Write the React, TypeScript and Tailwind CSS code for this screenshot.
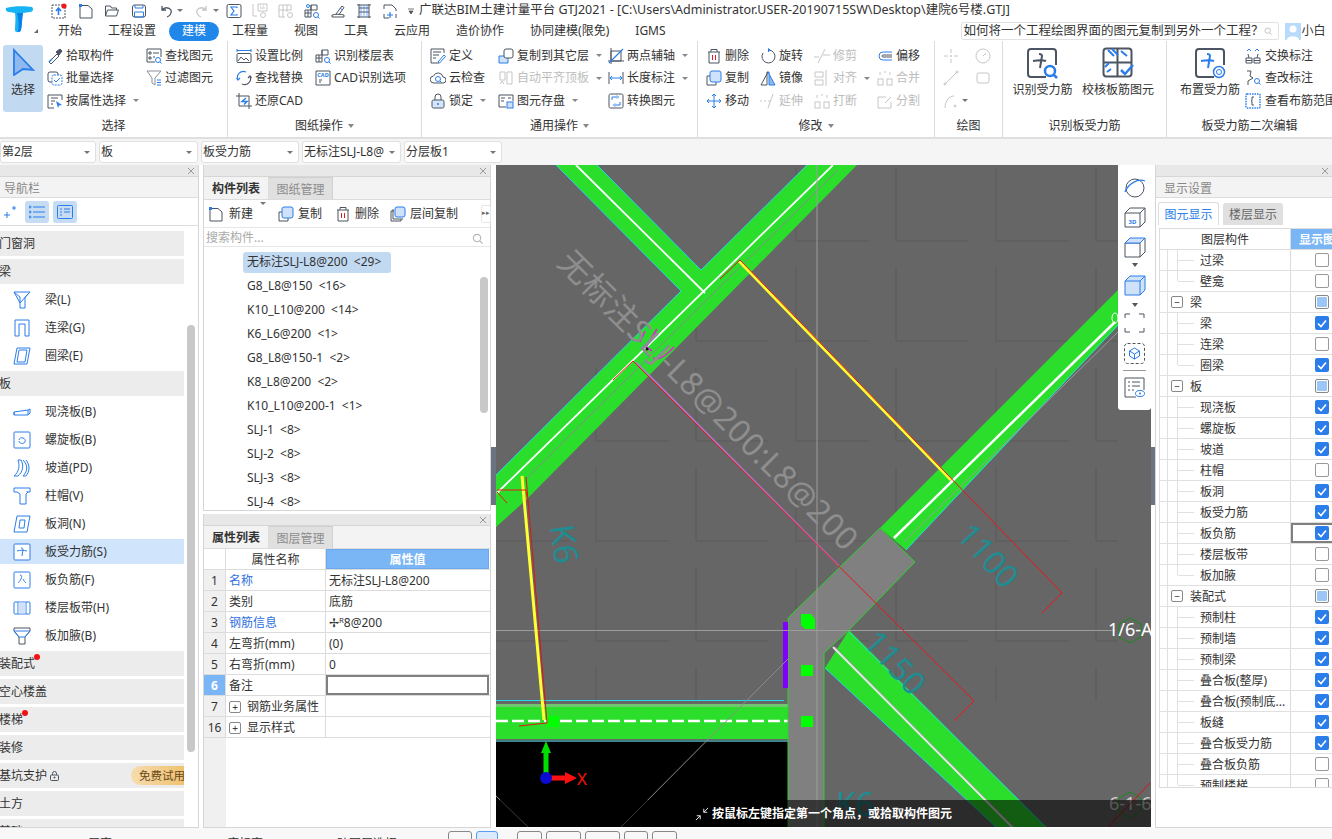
import type { ReactNode } from "react";

const DK = "#4b5563";
const BL = "#2b7de9";
const DI = "#c6c6c6";

function Svg({ s = 16, w, h, box, children }: { s?: number; w?: number; h?: number; box?: string; children: ReactNode }) {
  const width = w ?? s;
  const height = h ?? s;
  return (
    <svg width={width} height={height} viewBox={box ?? `0 0 ${width} ${height}`} fill="none" stroke={DK} strokeWidth="1" className="shrink-0">
      {children}
    </svg>
  );
}

// 顶部快捷栏 + 功能区图标
const icons: Record<string, ReactNode> = {
  upload: (<Svg><rect x="1" y="2" width="13" height="13" strokeDasharray="2 1" /><path d="M7.5 12V6M5 8l2.5-3L10 8" stroke={BL} strokeWidth="1.6" /><circle cx="13" cy="3" r="2.6" fill="#f01818" stroke="none" /></Svg>),
  newDoc: (<Svg><path d="M2 2.5h8l4 3.5v9H2z" /><rect x="1" y="1" width="3" height="3" fill={BL} stroke="none" /></Svg>),
  open: (<Svg><path d="M1.500 13V3h5l1 2h5v2M1.500 13l2-6h11l-2 6z" /></Svg>),
  save: (<Svg><rect x="1.500" y="2" width="13" height="12" rx="2" /><path d="M4 2v3h8V2M3.500 9h9v5h-9z" stroke={BL} /></Svg>),
  undo: (<Svg><path d="M4 3v4h4M4 7c2-3 7-3 9 0 1 3-1 6-4 7" strokeWidth="1.300" /></Svg>),
  redo: (<Svg><path d="M12 3v4H8M12 7c-2-3-7-3-9 0-1 3 1 6 4 7" stroke={DI} strokeWidth="1.300" /></Svg>),
  sigma: (<Svg><rect x="1" y="1.500" width="14" height="13" rx="1.500" stroke={DK} /><path d="M11 5V4H5l3 4-3 4h6v-1" stroke={BL} strokeWidth="1.200" /></Svg>),
  dimA: (<Svg><path d="M1 1v12h4M6 1h9v7H6zM8 3h1M11 3h1M8 5h5" stroke={DI} /><circle cx="11" cy="12" r="2.500" stroke={DI} /></Svg>),
  dimB: (<Svg><path d="M1 2h12v5M1 7h12M5 2v12M9 2v7M1 2v12h6" stroke={DI} /><circle cx="12" cy="12" r="2.500" stroke={DI} /></Svg>),
  floorFind: (<Svg><path d="M1 7h6v7H1zM7 2h6v5H7zM1 10h6M4 7v7M7 2v5" /><circle cx="12" cy="12" r="2.500" stroke={BL} /><path d="M14 14l1.500 1.500" stroke={BL} /><circle cx="4" cy="3" r="1.500" stroke={BL} /></Svg>),
  pencil: (<Svg><path d="M2 12c3-1 9-1 12 0v2H2zM6 11l6-8 2 1.500-5 7" stroke={DK} /><path d="M10 5l2 1.500" stroke={BL} /></Svg>),
  columns: (<Svg><path d="M1 2h14M1 14h14M3 1v14M13 1v14M3 5h10M3 9h10" stroke={DK} /><path d="M5 2v12M8 2v12M11 2v12" stroke={BL} strokeWidth=".6" /></Svg>),
  addDoc: (<Svg><path d="M2 6V2h8l4 4v2M2 11v4h5M14 11v4" /><path d="M8 9v6M5 12h6" stroke={BL} strokeWidth="1.200" /></Svg>),
  pick: (<Svg><path d="M2 14l8-8 2 2-8 8z" fill="#fff" /><path d="M9 4l3 3 3-4-2-2z" fill={DK} /><path d="M2 14l3-3" stroke={BL} strokeWidth="1.500" /></Svg>),
  batch: (<Svg><path d="M5 12H3a2 2 0 0 1-2-2V4a2 2 0 0 1 2-2h6a2 2 0 0 1 2 2v1" /><rect x="5" y="5" width="10" height="10" rx="2" strokeDasharray="2 1" stroke={BL} /><path d="M7 10l2 2 4-4" stroke={BL} /></Svg>),
  byProp: (<Svg><path d="M15 7V2H1v13h6M4 5h7M4 8h4M4 11h2" /><path d="M9 8l6 4-3 .5L11 15z" fill={BL} stroke="none" /></Svg>),
  find: (<Svg><path d="M9 14H1V1h14v8M3 4h2v2H3zM7 5h6M3 9h2v2H3zM7 9h2" /><circle cx="12" cy="12" r="2.500" stroke={BL} /><path d="M14 14l1.500 1.500" stroke={BL} /></Svg>),
  filter: (<Svg><path d="M1 1h14L9 8v7L6 13V8z" stroke="#8a8f98" /><path d="M11 10h4M11 12.500h4M11 15h4" stroke={BL} /></Svg>),
  scale: (<Svg><path d="M1 1v3M15 1v3M1 2.500h14" stroke={BL} /><rect x="1" y="5.500" width="14" height="9" rx="1" /><path d="M2 13l3-4 3 3 2-2 3 3" /></Svg>),
  floorTable: (<Svg><path d="M1 7h6v7H1zM7 2h6v5H7zM1 10h6M4 7v7M7 2v5" /><circle cx="12" cy="12" r="2.500" stroke={BL} /><path d="M14 14l1.500 1.500" stroke={BL} /></Svg>),
  replace: (<Svg><path d="M2 10a6 6 0 0 1 8-8M4 8L2 10 .500 8" stroke={BL} strokeWidth="1.200" /><path d="M14 6a6 6 0 0 1-8 8M12 8l2-2 1.500 2" strokeWidth="1.200" /></Svg>),
  cad: (<Svg><path d="M1 1h14v14H1z" /><text x="8" y="7" textAnchor="middle" fontSize="5.500" fontWeight="700" fill={BL} stroke="none">CAD</text><path d="M4 10h3M4 12h2" stroke={DK} /></Svg>),
  restore: (<Svg><path d="M3 0v13h13M0 3h13v13" /><path d="M10 5L6 8.500h5l-3 3" stroke={BL} strokeWidth="1.500" /></Svg>),
  define: (<Svg><path d="M14 5V1H1v14h8M3 4h8M3 7h6M3 10h3" /><path d="M8 14l6-7 1.500 1.500-6 6.500z" stroke={BL} /></Svg>),
  cloud: (<Svg><path d="M4 13a3.500 3.500 0 0 1-.5-7 5 5 0 0 1 9.500 1 3 3 0 0 1 0 6z" /><circle cx="8" cy="9" r="2.500" stroke={BL} /><path d="M10 11l1.500 1.500" stroke={BL} /></Svg>),
  lock: (<Svg><path d="M5 7V4a3 3 0 0 1 6 0v3" /><rect x="2" y="7" width="12" height="8" rx="1.500" fill="#d5e6fb" /><circle cx="8" cy="11" r="1" fill={BL} stroke="none" /></Svg>),
  copyFloor: (<Svg><path d="M1 8h9v7H1z" fill="#cfe2fa" stroke={BL} /><rect x="6" y="1" width="9" height="9" rx="2" fill="#fff" /></Svg>),
  layerCopy: (<Svg><path d="M4 5H1v10h10v-2M3 3v10h10" /><rect x="5" y="1" width="10" height="10" rx="2" fill="#cfe2fa" stroke={BL} /></Svg>),
  autoAlign: (<Svg><path d="M2 2h5v8H2zM9 2h5v12H9z" stroke={DI} /><path d="M2 14l2-3 2 3" stroke={DI} /></Svg>),
  disk: (<Svg><path d="M1 2h14v6M1 2v12h7M3 5h4M3 8h3M10 5h3" /><rect x="9" y="9" width="6" height="6" stroke={BL} fill="#cfe2fa" /></Svg>),
  twoPoint: (<Svg><path d="M3 3h10v10H3zM0 13h16M3 0v16" /><path d="M1 15L15 1" stroke={BL} strokeWidth="1.200" /></Svg>),
  length: (<Svg><path d="M1 2v12M15 2v12" /><path d="M2 8h12M4 6L2 8l2 2M12 6l2 2-2 2" stroke={BL} /></Svg>),
  convert: (<Svg><rect x="1" y="1" width="14" height="14" rx="1.500" /><path d="M4 7V4h5M9 2.500L10.500 4 9 5.500M12 9v3H7M7 10.500L5.500 12 7 13.500" stroke={BL} /></Svg>),
  del: (<Svg><path d="M2 4h12M5 4V1.500h6V4M3 4v11h10V4" /><path d="M6.500 7v5M9.500 7v5" stroke="#d92020" /></Svg>),
  rotate: (<Svg><path d="M9 2a6.500 6.500 0 1 1-6 3" /><path d="M8 .500L10 2 8 4" fill={BL} stroke={BL} /></Svg>),
  trim: (<Svg><path d="M0 9h5M9 7h7M4 15l7-14" stroke={DI} /></Svg>),
  offset: (<Svg><path d="M15 4H6a4 4 0 0 0 0 8h9" stroke={BL} /><path d="M15 7H6a1 1 0 0 0 0 2h9" /></Svg>),
  copy: (<Svg><path d="M4 6H1v9h9v-3" /><rect x="4" y="1" width="11" height="11" rx="2" fill="#cfe2fa" stroke={BL} /></Svg>),
  mirror: (<Svg><path d="M8 2L1 15h6V2z" /><path d="M8 2l7 13H9V2z" fill="#8fb9ef" stroke={BL} /></Svg>),
  align: (<Svg><path d="M1 2h8v5H1zM1 10h8v5H1zM12 0v16" stroke={DI} /></Svg>),
  merge: (<Svg><rect x="1" y="9" width="5" height="6" stroke={DI} /><rect x="10" y="9" width="5" height="6" stroke={DI} /><path d="M3 2v3M13 2v3M8 1v2" stroke={DI} /></Svg>),
  move: (<Svg><path d="M8 1v14M1 8h14M6 3l2-2 2 2M6 13l2 2 2-2M3 6L1 8l2 2M13 6l2 2-2 2" stroke={BL} /></Svg>),
  extend: (<Svg><path d="M0 8h2M4 8h2M8 8h3M8 15l5-14" stroke={DI} /></Svg>),
  split: (<Svg><path d="M14 9v6H1V4h8M8 10l6-6" stroke={DI} /></Svg>),
  cross: (<Svg><path d="M8 1v4M8 11v4M1 8h4M11 8h4" stroke={DI} /><circle cx="8" cy="8" r="1" fill={DI} stroke="none" /></Svg>),
  circleLine: (<Svg><circle cx="8" cy="8" r="7" stroke={DI} /><path d="M8 8l3-3" stroke={DI} /></Svg>),
  line: (<Svg><path d="M2 14L14 2" stroke={DI} /><circle cx="14" cy="2" r="1" stroke={DI} /><circle cx="2" cy="14" r="1" stroke={DI} /></Svg>),
  rect: (<Svg><rect x="2" y="3" width="12" height="10" rx="2" stroke={DI} /></Svg>),
  arc: (<Svg><path d="M2 15C2 8 6 3 11 3" stroke={DI} /><circle cx="12" cy="13" r="1" stroke={DI} /></Svg>),
  swap: (<Svg><path d="M1 10h6v5H1zM9 10h6v5H9zM1 12.500h6M9 12.500h6M4 10l-1-4M12 10l1-4" /><path d="M2 3l2-2M6 3L4 1M10 3l2-2M14 3l-2-2" stroke={BL} /></Svg>),
  editTag: (<Svg><path d="M2 1h4l-1 5 3 2-5 3v4" /><circle cx="12" cy="11" r="2.500" stroke={BL} /><path d="M14 13l1.500 1.500" stroke={BL} /></Svg>),
  range: (<Svg><rect x="1" y="1" width="14" height="14" rx="1" strokeDasharray="1.500 1" stroke={BL} strokeWidth="1.500" /><path d="M9 4H7v3.500L6 8l1 .5V12h2" /></Svg>),
};

function Bar({ blue }: { blue?: boolean }) {
  return blue ? <path d="M7 14c5-1 10-1 13 0M13 7c2 0 3 1 3 2l-2 12" stroke={BL} strokeWidth="2" /> : <path d="M7 14c5-1 10-1 13 0M13 7c2 0 3 1 3 2l-2 12" strokeWidth="2" />;
}

function BigRebar({ kind }: { kind: string }) {
  if (kind === "check") {
    return (
      <Svg s={32}>
        <rect x="1.500" y="1.500" width="28" height="28" rx="3" strokeWidth="2" />
        <path d="M15.500 2v27M2 15.500h27" strokeWidth="2" />
        <path d="M6 3l6 6M10 2l6 6M19 4l6 5M3 20l4-4M5 25l4-3" stroke={BL} strokeWidth="2" />
        <path d="M19 23l4 4 8-9" stroke={BL} strokeWidth="2.500" />
      </Svg>
    );
  }
  return (
    <Svg s={32}>
      <path d="M20 30H5a3 3 0 0 1-3-3V5a3 3 0 0 1 3-3h22a3 3 0 0 1 3 3v13" strokeWidth="2" />
      <Bar blue={kind === "set"} />
      {kind === "find" ? (
        <>
          <circle cx="24" cy="24" r="5" stroke={BL} strokeWidth="2.500" />
          <path d="M28 28l3 3" stroke={BL} strokeWidth="2.500" />
        </>
      ) : (
        <>
          <circle cx="25" cy="25" r="5.500" stroke={BL} strokeWidth="1.500" />
          <circle cx="25" cy="25" r="2.500" stroke={BL} />
        </>
      )}
    </Svg>
  );
}

const navIcons: Record<string, ReactNode> = {
  beam: (<Svg w={18} h={18}><path d="M1 1h16l-5 5v11H7V6z M1 1l6 11 10-11" stroke={BL} /></Svg>),
  link: (<Svg w={18} h={18}><path d="M2 17V1h14v16h-4V5H6v12z" stroke={BL} /></Svg>),
  ring: (<Svg w={18} h={18}><path d="M4 1h13l-3 16H1zM6 3h8l-2 12H4z" stroke={BL} /></Svg>),
  cast: (<Svg w={18} h={18}><path d="M1 9l14-2 2-1v4l-2 2H1zM1 9v3M15 7v5" stroke={BL} /></Svg>),
  spiral: (<Svg w={18} h={18}><rect x="1" y="1" width="16" height="16" rx="1" stroke={BL} /><path d="M6 9a3 3 0 1 1 6 2c-1 2-6 2-6-1" stroke={BL} /></Svg>),
  ramp: (<Svg w={18} h={18}><path d="M1 17c5-4 6-10 4-16h3c3 5 2 12-3 16zM10 1c5 5 5 11 0 16h3c4-5 4-11 0-16" stroke={BL} /></Svg>),
  cap: (<Svg w={18} h={18}><path d="M1 1h16v4h-3v-1M1 1v4h3l3 2v10h6V7l2-2" stroke={BL} /></Svg>),
  hole: (<Svg w={18} h={18}><path d="M4 1h13l-3 16H1z" stroke={BL} /><path d="M7 5h5l-1 8H6z" stroke={BL} /></Svg>),
  main: (<Svg w={18} h={18}><rect x="1" y="1" width="16" height="16" rx="1" stroke={BL} fill="#fff" /><path d="M4 8c3-1 7-1 10 0M8 5c2 0 2 1 2 2l-1 6" stroke={BL} /></Svg>),
  neg: (<Svg w={18} h={18}><rect x="1" y="1" width="16" height="16" rx="1" stroke={BL} /><path d="M7 4c2 0 2 2 1 4s-3 4-3 4M10 8c1 2 2 3 3 4" stroke={BL} /></Svg>),
  band: (<Svg w={18} h={18}><rect x="1" y="3" width="16" height="12" rx="1" stroke={BL} /><path d="M5 3v12M13 3v12" stroke={BL} /><rect x="5.500" y="3.500" width="7" height="11" fill="#cfe2fa" stroke="none" /></Svg>),
  haunch: (<Svg w={18} h={18}><path d="M1 1h16v3l-5 6v7H6v-7L1 4z" /><path d="M1 4h16l-5 6H6z" stroke={BL} /></Svg>),
};

function Item({ icon, label, caret, dim }: { icon: string; label: string; caret?: boolean; dim?: boolean }) {
  return (
    <div className={`flex h-[22.5px] items-center gap-[3px] whitespace-nowrap ${dim ? "text-[#bdbdbd]" : ""}`}>
      {icons[icon]}
      <span>{label}</span>
      {caret && <span className="ml-[4px] h-0 w-0 border-x-[3px] border-t-[3px] border-x-transparent border-t-[#888]" />}
    </div>
  );
}

function Group({ width, label, caret, children }: { width: string; label: string; caret?: boolean; children: ReactNode }) {
  return (
    <div className={`flex shrink-0 flex-col border-r border-[#dcdcdc] ${width}`}>
      <div className="flex h-[73px] pt-[3.500px]">{children}</div>
      <div className="flex flex-1 items-center justify-center gap-[5px]">
        {label}
        {caret && <span className="h-0 w-0 border-x-[3.5px] border-t-[4px] border-x-transparent border-t-[#888]" />}
      </div>
    </div>
  );
}

function Col({ className, children }: { className: string; children: ReactNode }) {
  return <div className={`flex shrink-0 flex-col ${className}`}>{children}</div>;
}

function Caret() {
  return <span className="h-0 w-0 border-x-[3px] border-t-[3px] border-x-transparent border-t-[#777]" />;
}

function PanelClose() {
  return (
    <div className="flex h-[12px] items-center justify-end border-b border-[#d6d6d6] bg-[#e8e8e8] pr-[3px] text-[#999]">
      <svg width="8" height="8" viewBox="0 0 8 8" stroke="#9a9a9a"><path d="M1 1l6 6M7 1L1 7" /></svg>
    </div>
  );
}

const quick = ["upload", "newDoc", "open", "save"];
const quick2 = ["sigma", "dimA", "dimB", "floorFind", "pencil", "columns", "addDoc"];

function TopBar() {
  return (
    <div className="flex h-[41px]">
      <div className="relative w-[50px] shrink-0">
        <svg width="30" height="30" viewBox="0 0 30 30" className="ml-[4px] mt-[3px]">
          <path d="M2 5c6-2 20-2 26-1 2 2 1 5-2 5l-7 1c-1 5-1 12-2 17-1 3-6 3-6 0 0-6 1-12 0-17L5 9C3 9 1 7 2 5z" fill="#16b4f2" />
          <path d="M13 10l6 0c-1 5-1 12-2 17-1 2-2 2-3 2 1-6 1-13-1-19z" fill="#0a7fe6" />
        </svg>
        <span className="absolute bottom-[8px] right-[12px] h-0 w-0 border-b-[4px] border-l-[4px] border-b-[#666] border-l-transparent" />
      </div>
      <div className="min-w-0 flex-1">
        <div className="flex h-[21px] items-center">
          <div className="flex w-[102px] shrink-0 gap-[10.500px] pl-[1px]">
            {quick.map((k) => <span key={k}>{icons[k]}</span>)}
          </div>
          <div className="flex w-[34px] shrink-0 items-center gap-[3px] pl-[6px]">{icons.undo}<Caret /></div>
          <div className="flex w-[34px] shrink-0 items-center gap-[3px] pl-[8px]">{icons.redo}<Caret /></div>
          <div className="ml-[6px] flex shrink-0 gap-[10px]">
            {quick2.map((k) => <span key={k}>{icons[k]}</span>)}
          </div>
          <svg width="6" height="6" viewBox="0 0 6 6" className="ml-[10px] shrink-0" stroke="#555" fill="#555"><path d="M0 1h6M1 3h4l-2 3z" strokeWidth=".8" /></svg>
          <span className="ml-[5px] whitespace-nowrap text-[12.500px]">广联达BIM土建计量平台 GTJ2021 - [C:\Users\Administrator.USER-20190715SW\Desktop\建院6号楼.GTJ]</span>
        </div>
        <div className="flex h-[20px] items-center text-[12px]">
          <span className="ml-[8px]">开始</span>
          <span className="ml-[26px]">工程设置</span>
          <span className="ml-[13px] flex h-[19px] w-[50px] items-center justify-center rounded-full bg-[#1f86ea] text-white">建模</span>
          <span className="ml-[13px]">工程量</span>
          <span className="ml-[26px]">视图</span>
          <span className="ml-[26px]">工具</span>
          <span className="ml-[26px]">云应用</span>
          <span className="ml-[26px]">造价协作</span>
          <span className="ml-[26px]">协同建模(限免)</span>
          <span className="ml-[26px]">IGMS</span>
          <div className="ml-[295px] flex h-[18px] w-[318px] shrink-0 items-center justify-between rounded-[2px] border border-[#e2e2e2] bg-white pl-[2px] pr-[6px] text-[12.500px]">
            <span className="whitespace-nowrap">如何将一个工程绘图界面的图元复制到另外一个工程？</span>
            <svg width="12" height="12" viewBox="0 0 12 12" fill="none" stroke="#b5b5b5" strokeWidth="1.200"><circle cx="5.500" cy="5.500" r="4" /><path d="M8.500 8.500l3 3" /></svg>
          </div>
          <svg width="16" height="17" viewBox="0 0 16 17" className="ml-[6px] shrink-0"><rect width="16" height="17" fill="#b9dbfb" /><circle cx="8" cy="6" r="3.500" fill="#fff" /><path d="M2 17c0-5 12-5 12 0z" fill="#fff" /></svg>
          <span className="ml-[1px] whitespace-nowrap">小白</span>
        </div>
      </div>
    </div>
  );
}

function Ribbon() {
  return (
    <div className="flex h-[98px] border-b-2 border-[#dfdfdf] text-[12px]">
      <Group width="w-[228px]" label="选择">
        <div className="ml-[3px] flex h-[67px] w-[40px] shrink-0 flex-col items-center rounded-[3px] bg-[#c2d9f2] pt-[3px]">
          <svg width="24" height="28" viewBox="0 0 24 28" fill="#8fb9ef" stroke={BL} strokeWidth="1.800"><path d="M3 2L22 22L12 21L3 27z" /></svg>
          <span className="mt-[5px]">选择</span>
        </div>
        <Col className="ml-[4px] w-[99px]">
          <Item icon="pick" label="拾取构件" />
          <Item icon="batch" label="批量选择" />
          <Item icon="byProp" label="按属性选择" caret />
        </Col>
        <Col className="w-[70px]">
          <Item icon="find" label="查找图元" />
          <Item icon="filter" label="过滤图元" />
        </Col>
      </Group>
      <Group width="w-[194px]" label="图纸操作" caret>
        <Col className="ml-[8px] w-[79px]">
          <Item icon="scale" label="设置比例" />
          <Item icon="replace" label="查找替换" />
          <Item icon="restore" label="还原CAD" />
        </Col>
        <Col className="w-[90px]">
          <Item icon="floorTable" label="识别楼层表" />
          <Item icon="cad" label="CAD识别选项" />
        </Col>
      </Group>
      <Group width="w-[276px]" label="通用操作" caret>
        <Col className="ml-[8px] w-[68px]">
          <Item icon="define" label="定义" />
          <Item icon="cloud" label="云检查" />
          <Item icon="lock" label="锁定" caret />
        </Col>
        <Col className="w-[110px]">
          <Item icon="copyFloor" label="复制到其它层" caret />
          <Item icon="autoAlign" label="自动平齐顶板" caret dim />
          <Item icon="disk" label="图元存盘" caret />
        </Col>
        <Col className="w-[88px]">
          <Item icon="twoPoint" label="两点辅轴" caret />
          <Item icon="length" label="长度标注" caret />
          <Item icon="convert" label="转换图元" />
        </Col>
      </Group>
      <Group width="w-[237px]" label="修改" caret>
        <Col className="ml-[8px] w-[54px]">
          <Item icon="del" label="删除" />
          <Item icon="copy" label="复制" />
          <Item icon="move" label="移动" />
        </Col>
        <Col className="w-[54px]">
          <Item icon="rotate" label="旋转" />
          <Item icon="mirror" label="镜像" />
          <Item icon="extend" label="延伸" dim />
        </Col>
        <Col className="w-[63px]">
          <Item icon="trim" label="修剪" dim />
          <Item icon="align" label="对齐" caret dim />
          <Item icon="merge" label="打断" dim />
        </Col>
        <Col className="w-[50px]">
          <Item icon="offset" label="偏移" />
          <Item icon="merge" label="合并" dim />
          <Item icon="split" label="分割" dim />
        </Col>
      </Group>
      <Group width="w-[68px]" label="绘图">
        <Col className="ml-[8px] w-[32px]">
          <Item icon="cross" label="" />
          <Item icon="line" label="" />
          <div className="flex h-[22.500px] items-center gap-[3px]">{icons.arc}<Caret /></div>
        </Col>
        <Col className="w-[20px]">
          <Item icon="circleLine" label="" />
          <Item icon="rect" label="" />
        </Col>
      </Group>
      <Group width="w-[164px]" label="识别板受力筋">
        <div className="ml-[-1px] flex w-[80px] shrink-0 flex-col items-center pt-[2px]">
          <BigRebar kind="find" />
          <span className="mt-[2px] whitespace-nowrap pl-[1px]">识别受力筋</span>
        </div>
        <div className="flex w-[72px] shrink-0 flex-col items-center pt-[2px]">
          <BigRebar kind="check" />
          <span className="mt-[2px] whitespace-nowrap">校核板筋图元</span>
        </div>
      </Group>
      <Group width="flex-1 min-w-0 !border-r-0" label="板受力筋二次编辑">
        <div className="ml-[9px] flex w-[68px] shrink-0 flex-col items-center pt-[2px]">
          <BigRebar kind="set" />
          <span className="mt-[2px] whitespace-nowrap">布置受力筋</span>
        </div>
        <Col className="ml-[1px]">
          <div className="flex h-[22.500px] items-center gap-[4px] whitespace-nowrap">{icons.swap}<span>交换标注</span></div>
          <div className="flex h-[22.500px] items-center gap-[4px] whitespace-nowrap">{icons.editTag}<span>查改标注</span></div>
          <div className="flex h-[22.500px] items-center gap-[4px] whitespace-nowrap">{icons.range}<span>查看布筋范围</span></div>
        </Col>
      </Group>
    </div>
  );
}

function Sel({ label, width }: { label: string; width: string }) {
  return (
    <div className={`flex h-[22px] shrink-0 items-center justify-between rounded-[3px] border border-[#e0e0e0] bg-white pl-[1px] pr-[5px] ${width}`}>
      <span className="whitespace-nowrap">{label}</span>
      <Caret />
    </div>
  );
}

const navRows: { t: string; k?: string; sel?: boolean; dot?: boolean; extra?: string }[] = [
  { t: "门窗洞" },
  { t: "梁" },
  { t: "梁(L)", k: "beam" },
  { t: "连梁(G)", k: "link" },
  { t: "圈梁(E)", k: "ring" },
  { t: "板" },
  { t: "现浇板(B)", k: "cast" },
  { t: "螺旋板(B)", k: "spiral" },
  { t: "坡道(PD)", k: "ramp" },
  { t: "柱帽(V)", k: "cap" },
  { t: "板洞(N)", k: "hole" },
  { t: "板受力筋(S)", k: "main", sel: true },
  { t: "板负筋(F)", k: "neg" },
  { t: "楼层板带(H)", k: "band" },
  { t: "板加腋(B)", k: "haunch" },
  { t: "装配式", dot: true },
  { t: "空心楼盖" },
  { t: "楼梯", dot: true },
  { t: "装修" },
  { t: "基坑支护", extra: "lock" },
  { t: "土方" },
  { t: "基础" },
];

function NavPanel() {
  return (
    <div className="flex h-full w-[199px] shrink-0 flex-col border-b border-r border-[#d6d6d6] bg-white">
      <PanelClose />
      <div className="flex h-[21px] items-center border-b border-[#dcdcdc] bg-[#f3f3f3] pl-[4px] pt-[3px] text-[#888]">导航栏</div>
      <div className="flex h-[28px] items-center border-b border-[#dcdcdc]">
        <svg width="14" height="14" viewBox="0 0 14 14" stroke={BL} className="ml-[3px]"><path d="M1 10h6M4 7v6M9 3h4M11 1v4" /></svg>
        <span className="ml-[8px] flex h-[22px] w-[24px] items-center justify-center rounded-[3px] bg-[#c5dcf3]">
          <svg width="16" height="14" viewBox="0 0 16 14" stroke={BL}><path d="M4 2h12M4 7h12M4 12h12" /><circle cx="1" cy="2" r="1" fill="none" /><circle cx="1" cy="7" r="1" fill="none" /><circle cx="1" cy="12" r="1" fill="none" /></svg>
        </span>
        <span className="ml-[4px] flex h-[22px] w-[24px] items-center justify-center rounded-[3px] bg-[#c5dcf3]">
          <svg width="16" height="14" viewBox="0 0 16 14" stroke={BL} fill="none"><rect x=".5" y=".5" width="15" height="13" rx="1" /><path d="M3 4h2M7 4h6M3 7h2M7 7h6M3 10h2" /></svg>
        </span>
      </div>
      <div className="flex min-h-0 flex-1 overflow-hidden pt-[5px]">
        <div className="w-[184px] shrink-0">
          {navRows.map((r) => (
            <div key={r.t} className={`mb-[3px] flex h-[25px] items-center whitespace-nowrap ${r.sel ? "bg-[#d0e5fb]" : r.k ? "" : "bg-[#ececec]"}`}>
              {r.k ? (
                <>
                  <span className="ml-[13px] w-[32px] shrink-0">{navIcons[r.k]}</span>
                  <span>{r.t}</span>
                </>
              ) : (
                <span className="relative ml-[-1px]">
                  {r.t}
                  {r.dot && <span className="absolute right-[-5px] top-[-1px] h-[6px] w-[6px] rounded-full bg-[#f21010]" />}
                </span>
              )}
              {r.extra && (
                <>
                  <svg width="9" height="10" viewBox="0 0 9 10" fill="none" stroke={DK} className="ml-[3px]"><path d="M2.500 4V2.500a2 2 0 0 1 4 0V4" /><rect x=".5" y="4" width="8" height="5.500" rx="1" /><circle cx="4.500" cy="6.500" r=".6" fill={DK} /></svg>
                  <span className="ml-auto flex h-[19px] w-[53px] items-center rounded-l-full bg-gradient-to-r from-[#f7dcae] to-[#efc26e] pl-[8px] text-[11.500px] text-[#6b4a1a]">免费试用</span>
                </>
              )}
            </div>
          ))}
        </div>
        <div className="ml-[3px] mt-[94px] h-[427px] w-[8px] rounded-full bg-[#c8c8c8]" />
      </div>
    </div>
  );
}

const compRows = ["无标注SLJ-L8@200  <29>", "G8_L8@150  <16>", "K10_L10@200  <14>", "K6_L6@200  <1>", "G8_L8@150-1  <2>", "K8_L8@200  <2>", "K10_L10@200-1  <1>", "SLJ-1  <8>", "SLJ-2  <8>", "SLJ-3  <8>", "SLJ-4  <8>"];

function PanelTabs({ a, b }: { a: string; b: string }) {
  return (
    <div className="flex h-[23px] items-stretch border-b border-[#dcdcdc] bg-[#f3f3f3]">
      <div className="flex w-[65px] items-center justify-center border-r border-[#dcdcdc] pt-[2px] font-bold">{a}</div>
      <div className="flex w-[64px] items-center justify-center border-r border-t border-[#d0d0d0] bg-[#e0e0e0] pt-[2px] text-[#8c8c8c]">{b}</div>
    </div>
  );
}

function ComponentPanel() {
  return (
    <div className="flex h-[346px] shrink-0 flex-col border-x border-b border-[#d6d6d6] bg-white">
      <PanelClose />
      <PanelTabs a="构件列表" b="图纸管理" />
      <div className="flex h-[28px] items-center whitespace-nowrap border-b border-[#e6e6e6] pl-[4px]">
        <span className="shrink-0">{icons.newDoc}</span>
        <span className="ml-[5px] shrink-0">新建</span>
        <span className="ml-[7px] shrink-0"><Caret /></span>
        <span className="ml-[12px] shrink-0">{icons.copy}</span>
        <span className="ml-[4px] shrink-0">复制</span>
        <span className="ml-[13px] shrink-0">{icons.del}</span>
        <span className="ml-[4px] shrink-0">删除</span>
        <span className="ml-[11px] shrink-0">{icons.layerCopy}</span>
        <span className="ml-[4px] shrink-0">层间复制</span>
        <span className="ml-[23px] flex h-[18px] w-[10px] shrink-0 items-center justify-center rounded-[2px] border border-[#e6e6e6] text-[7px] text-[#666]">▸▸</span>
      </div>
      <div className="flex h-[19px] items-center justify-between border-b border-[#e6e6e6] pl-[2px] pr-[7px] pt-[2px] text-[#aaa]">
        <span>搜索构件...</span>
        <svg width="11" height="11" viewBox="0 0 12 12" fill="none" stroke="#b5b5b5" strokeWidth="1.200"><circle cx="5.500" cy="5.500" r="4" /><path d="M8.500 8.500l3 3" /></svg>
      </div>
      <div className="flex min-h-0 flex-1 overflow-hidden pt-[3px]">
        <div className="w-[275px] shrink-0 pl-[39px]">
          {compRows.map((r, i) => (
            <div key={r} className="flex h-[24px] items-center">
              <span className={`flex h-[21px] items-center whitespace-pre rounded-[3px] pl-[4px] ${i === 0 ? "w-[148px] bg-[#c2d9f2]" : ""}`}>{r}</span>
            </div>
          ))}
        </div>
        <div className="ml-[1px] mt-[27px] h-[136px] w-[8px] rounded-full bg-[#c8c8c8]" />
      </div>
    </div>
  );
}

const props = [
  { n: "1", k: "名称", v: "无标注SLJ-L8@200", blue: true },
  { n: "2", k: "类别", v: "底筋" },
  { n: "3", k: "钢筋信息", v: "✢ᴿ8@200", blue: true },
  { n: "4", k: "左弯折(mm)", v: "(0)" },
  { n: "5", k: "右弯折(mm)", v: "0" },
  { n: "6", k: "备注", v: "", active: true },
  { n: "7", k: "钢筋业务属性", v: "", tree: true },
  { n: "16", k: "显示样式", v: "", tree: true },
];

function PropertyPanel() {
  return (
    <div className="flex min-h-0 flex-1 flex-col border-x border-b border-[#d6d6d6] bg-white">
      <PanelClose />
      <PanelTabs a="属性列表" b="图层管理" />
      <div className="flex min-h-0 flex-1">
        <div className="flex min-w-0 flex-1 flex-col">
          <div className="flex h-[21px] border-b border-[#dcdcdc]">
            <div className="w-[22px] shrink-0 border-r border-[#dcdcdc]" />
            <div className="flex w-[100px] shrink-0 items-center justify-center border-r border-[#dcdcdc] pt-[2px]">属性名称</div>
            <div className="flex w-[163px] shrink-0 items-center justify-center border border-[#6aa9ef] bg-[#7ab5f5] pt-[2px] font-bold text-white">属性值</div>
          </div>
          {props.map((p) => (
            <div key={p.n} className="flex h-[21px] border-b border-[#dcdcdc]">
              <div className={`flex w-[22px] shrink-0 items-center justify-center border-r border-[#dcdcdc] pt-[2px] ${p.active ? "bg-[#7ab5f5] font-bold text-white" : "bg-[#f0f0f0]"}`}>{p.n}</div>
              <div className={`flex w-[100px] shrink-0 items-center whitespace-nowrap border-r border-[#dcdcdc] pl-[3px] pt-[2px] ${p.blue ? "text-[#2f6fe0]" : ""}`}>
                {p.tree && <span className="mr-[6px] flex h-[12px] w-[12px] items-center justify-center rounded-[2px] border border-[#888] text-[10px] leading-none">+</span>}
                {p.k}
              </div>
              <div className={`flex w-[163px] shrink-0 items-center pl-[3px] pt-[2px] ${p.active ? "border-2 border-[#808080]" : ""}`}>{p.v}</div>
            </div>
          ))}
          <div className="flex-1"><div className="h-full w-[22px] bg-[#f0f0f0]" /></div>
        </div>
      </div>
    </div>
  );
}

// 画布
function Canvas() {
  const cyan = "#20d8e8";
  const green = "#2bde2b";
  const vx = [
    [596, 368],
    [696, 268],
    [796, 168],
    [896, 168],
    [996, 168],
    [1096, 168],
  ];
  const hy = [
    [241, 796],
    [341, 696],
    [441, 596],
    [541, 496],
    [641, 496],
  ];
  return (
    <svg width="655" height="662" viewBox="496 165 655 662" className="block bg-[#666666]">
      {vx.map(([x, y]) => <line key={x} x1={x} x2={x} y1={y} y2={700} stroke="#5b5b5b" strokeDasharray="73 27" />)}
      {hy.map(([y, x]) => <line key={y} x1={x} x2={1118} y1={y} y2={y} stroke="#5b5b5b" strokeDasharray="73 27" />)}

      <rect x="496" y="742" width="292" height="86" fill="#000" />
      {/* 横向板带 */}
      <rect x="496" y="707" width="292" height="32" fill={green} />
      <rect x="496" y="704" width="292" height="3" fill="#6fc86f" />
      <line x1="496" x2="784" y1="700.500" y2="700.500" stroke={cyan} />
      <line x1="496" x2="788" y1="741" y2="741" stroke="#1fa0a8" />
      <line x1="496" x2="788" y1="721" y2="721" stroke="#fff" strokeWidth="2.500" strokeDasharray="12 4" />

      {/* 斜向板带 */}
      <polygon points="496,475 681,291 556,165 597,165 701,270 807,165 857,165 526,500 496,527" fill={green} />
      <path d="M496 475L681 291L556 165M597 165L701 270L807 165" stroke={cyan} fill="none" />
      <path d="M497 493L833 165M576 165L705 293" stroke="#fff" strokeWidth="1.800" fill="none" />
      <path d="M527 478L838 170" stroke="#8a8a8a" />

      <polygon points="880,528 1150,258 1150,292 906,550" fill={green} />
      <path d="M906 550L1118 325" stroke={cyan} />
      <path d="M894 538L1115 322" stroke="#fff" strokeWidth="2.500" />
      <path d="M904 542L1118 332" stroke="#9a9a9a" />
      <ellipse cx="1115" cy="318" rx="3" ry="5" stroke="#fff" fill="none" />

      <polygon points="849,630 1047,828 997,828 825,668" fill={green} />
      <path d="M849 632L1047 828M825 668L997 828" stroke={cyan} />
      <path d="M833 647L1013 828" stroke="#e6e6e6" strokeWidth="2" />
      <path d="M835 647L1013 826" stroke="#999" strokeWidth=".8" />

      {/* 柱 */}
      <polygon points="880,528 915,562 849,630 824,653 824,828 788,828 788,618" fill="#808080" stroke="#28d428" />
      <rect x="783" y="622" width="5" height="66" fill="#7f00ff" />
      <polygon points="801,614 811,614 815,619 815,629 805,629 801,625" fill="#00ff00" />
      <rect x="801" y="665" width="12" height="11" fill="#00ff00" />
      <rect x="801" y="716" width="12" height="11" fill="#00ff00" />
      <rect x="547" y="716" width="12" height="11" fill="#00ff00" />

      {/* 轴线 */}
      <line x1="817" x2="817" y1="165" y2="828" stroke="#9c9c9c" />
      <line x1="496" x2="1115" y1="630.500" y2="630.500" stroke="#9c9c9c" />
      <path d="M788 659L620 828M495 795L529 828" stroke="#8c8c8c" />

      {/* 钢筋 */}
      <path d="M739 261L951 480" stroke="#ffff33" strokeWidth="3" />
      <path d="M720 279L740 260L1062 593L1042 613" stroke="#f01414" fill="none" />
      <path d="M636 362L839 566" stroke="#b07cd8" strokeWidth="1.500" />
      <path d="M613 380L633 361L974 701L954 721" stroke="#f01414" fill="none" />
      <path d="M522 476L544 720" stroke="#ffff33" strokeWidth="3" />
      <path d="M526 477L547 723L519 726" stroke="#e01414" fill="none" />
      <path d="M497 490H526L528 503M497 492L507 503" stroke="#f01414" fill="none" />
      <path d="M645 331L640 342M657 329L646 347L652 351M653 358Q660 362 674 347" stroke="#e02ad0" strokeWidth="1.800" fill="none" />
      <circle cx="647" cy="349" r="1.500" fill="#000" />

      {/* 文字标注 */}
      <text x="556" y="264" fontSize="32" fill="#8e8e8e" transform="rotate(45 556 264)" textLength="408">无标注SLJ-L8@200:L8@200</text>
      <g fill="#1f8c92">
        <text x="550" y="526" fontSize="33" transform="rotate(82 550 526)">K6</text>
        <text x="955" y="536" fontSize="32" transform="rotate(48 955 536)">1100</text>
        <text x="862" y="643" fontSize="32" transform="rotate(48 862 643)">1150</text>
        <text x="836" y="816" fontSize="32">K6</text>
      </g>
      <g fill="#ffffff" fontSize="18">
        <polygon points="1130,618 1141,624 1141,637 1130,643 1119,637 1119,624" fill="none" stroke="#1a8a1a" />
        <text x="1108" y="636">1/6-A</text>
      </g>
      <polygon points="1130,792 1141,798 1141,811 1130,818 1119,811 1119,798" fill="none" stroke="#1a8a1a" />
      <text x="1109" y="810" fontSize="18" fill="#cfcfcf">6-1-6</text>
      <path d="M1150 783L1107 828" stroke="#d81414" />

      {/* 坐标轴 */}
      <path d="M546 778V752" stroke="#00e000" strokeWidth="5" />
      <polygon points="541,753 551,753 546,741" fill="#00e000" />
      <path d="M546 778H565" stroke="#ff1010" strokeWidth="5" />
      <polygon points="565,772 565,784 577,778" fill="#ff1010" />
      <circle cx="546" cy="778" r="6" fill="#0a0ad0" />
      <text x="577" y="785" fontSize="17" fill="#ff1010">X</text>
    </svg>
  );
}

const layerRows: { t: string; p?: boolean; c: number; sel?: boolean; last?: boolean }[] = [
  { t: "过梁", c: 0 },
  { t: "壁龛", c: 0, last: true },
  { t: "梁", p: true, c: 2 },
  { t: "梁", c: 1 },
  { t: "连梁", c: 0 },
  { t: "圈梁", c: 1, last: true },
  { t: "板", p: true, c: 2 },
  { t: "现浇板", c: 1 },
  { t: "螺旋板", c: 1 },
  { t: "坡道", c: 1 },
  { t: "柱帽", c: 0 },
  { t: "板洞", c: 1 },
  { t: "板受力筋", c: 1 },
  { t: "板负筋", c: 1, sel: true },
  { t: "楼层板带", c: 0 },
  { t: "板加腋", c: 0, last: true },
  { t: "装配式", p: true, c: 2 },
  { t: "预制柱", c: 1 },
  { t: "预制墙", c: 1 },
  { t: "预制梁", c: 1 },
  { t: "叠合板(整厚)", c: 1 },
  { t: "叠合板(预制底...", c: 1 },
  { t: "板缝", c: 1 },
  { t: "叠合板受力筋", c: 1 },
  { t: "叠合板负筋", c: 0 },
  { t: "预制楼梯", c: 0, last: true },
];

function Check({ c }: { c: number }) {
  if (c === 1) {
    return (
      <span className="flex h-[14px] w-[14px] items-center justify-center rounded-[2px] bg-[#2b7de9]">
        <svg width="10" height="9" viewBox="0 0 10 9" fill="none" stroke="#fff" strokeWidth="1.600"><path d="M1 4.500l3 3 5-6" /></svg>
      </span>
    );
  }
  if (c === 2) {
    return (
      <span className="flex h-[14px] w-[14px] items-center justify-center rounded-[2px] border border-[#888] bg-white">
        <span className="h-[10px] w-[10px] rounded-[1px] bg-[#9cc6f8]" />
      </span>
    );
  }
  return <span className="h-[14px] w-[14px] rounded-[2px] border border-[#999] bg-white" />;
}

function DisplayPanel() {
  return (
    <div className="flex h-full min-w-0 flex-1 flex-col overflow-hidden border-b border-l border-[#d6d6d6] bg-white">
      <PanelClose />
      <div className="flex h-[21px] items-center border-b border-[#dcdcdc] bg-[#f3f3f3] pl-[8px] pt-[3px] text-[#888]">显示设置</div>
      <div className="flex h-[27px] items-end gap-[4px] pl-[2px]">
        <div className="flex h-[23px] w-[61px] items-center justify-center rounded-t-[3px] border border-b-0 border-[#dcdcdc] pt-[2px] text-[#2b7de9]">图元显示</div>
        <div className="flex h-[22px] w-[60px] items-center justify-center rounded-t-[3px] bg-[#e0e0e0] pt-[2px] text-[#666]">楼层显示</div>
      </div>
      <div className="ml-[3px] mt-[3px] flex h-[560px] flex-col overflow-hidden border-b border-l border-t border-[#dcdcdc]">
        <div className="flex h-[21px] shrink-0 border-b border-[#dcdcdc]">
          <div className="flex w-[131px] shrink-0 items-center justify-center border-r border-[#dcdcdc] pt-[2px]">图层构件</div>
          <div className="flex w-[60px] shrink-0 items-center overflow-hidden whitespace-nowrap bg-[#7ab5f5] pl-[8px] pt-[2px] font-bold text-white">显示图元</div>
        </div>
        {layerRows.map((r, i) => (
          <div key={`${r.t}${i}`} className="flex h-[21px] shrink-0 border-b border-[#e0e0e0]">
            <div className="flex w-[131px] shrink-0 items-center border-r border-[#dcdcdc]">
              <span className="h-full w-[8px] shrink-0 border-r border-[#e0e0e0]" />
              {r.p ? (
                <>
                  <span className="ml-[3px] flex h-[12px] w-[12px] shrink-0 items-center justify-center rounded-[2px] border border-[#888] text-[10px] leading-none">−</span>
                  <span className="ml-[7px] whitespace-nowrap pt-[2px]">{r.t}</span>
                </>
              ) : (
                <>
                  <span className={`w-[10px] shrink-0 border-r border-[#e0e0e0] ${r.last ? "mb-[10px] h-[10px] self-start" : "h-full"}`} />
                  <span className="h-px w-[16px] shrink-0 bg-[#e0e0e0]" />
                  <span className="ml-[6px] whitespace-nowrap pt-[2px]">{r.t}</span>
                </>
              )}
            </div>
            <div className={`flex w-[60px] shrink-0 items-center pl-[24px] ${r.sel ? "border-2 border-[#808080] !pl-[22px]" : ""}`}>
              <Check c={r.c} />
            </div>
          </div>
        ))}
      </div>
    </div>
  );
}

function FloatTool() {
  return (
    <div className="absolute right-0 top-0 flex h-[245px] w-[33px] flex-col items-center rounded-b-[3px] bg-white pt-[13px]">
      <svg width="22" height="20" viewBox="0 0 22 20" fill="none" stroke={DK}><ellipse cx="11" cy="10" rx="9" ry="9" /><path d="M1 14C4 6 14 0 21 3" stroke={BL} strokeWidth="1.300" /></svg>
      <svg width="22" height="21" viewBox="0 0 22 21" fill="none" stroke={DK} className="mt-[9px]"><path d="M1 6h15v14H1zM1 6l5-5h15v14l-5 5M16 6l5-5" /><text x="8.500" y="17" textAnchor="middle" fontSize="6" fontWeight="700" fill={BL} stroke="none">3D</text></svg>
      <svg width="22" height="21" viewBox="0 0 22 21" fill="none" stroke={DK} className="mt-[9px]"><path d="M1 6h15v14H1zM16 20l5-5V1" /><path d="M1 6l5-5h15l-5 5z" fill="#cfe2fa" stroke={BL} /></svg>
      <span className="mt-[5px] h-0 w-0 border-x-[3px] border-t-[4px] border-x-transparent border-t-[#555]" />
      <svg width="22" height="21" viewBox="0 0 22 21" fill="#cfe2fa" stroke={BL} className="mt-[8px]"><path d="M1 6h15v14H1zM1 6l5-5h15v14l-5 5M16 6l5-5" /></svg>
      <span className="mt-[7px] h-0 w-0 border-x-[3px] border-t-[4px] border-x-transparent border-t-[#555]" />
      <svg width="21" height="20" viewBox="0 0 21 20" fill="none" stroke={DK} className="mt-[6px]"><path d="M1 5V1h5M15 1h5v4M20 15v4h-5M6 19H1v-4" /></svg>
      <svg width="21" height="21" viewBox="0 0 21 21" fill="none" stroke={DK} className="mt-[10px]"><rect x=".5" y=".5" width="20" height="20" rx="3" strokeDasharray="3 2" /><path d="M10.500 5l5 3v5l-5 3-5-3V8zM5.500 8l5 3 5-3M10.500 11v5" stroke={BL} /></svg>
      <span className="mt-[6px] h-px w-[23px] bg-[#999]" />
      <svg width="21" height="21" viewBox="0 0 21 21" fill="none" stroke={DK} className="mt-[6px]"><path d="M12 20H1V1h19v12M4 5h2M8 5h8M4 9h2M8 9h8M4 13h2M8 13h2" /><ellipse cx="16" cy="16.500" rx="4.500" ry="3" stroke={BL} /><circle cx="16" cy="16.500" r="1" fill={BL} stroke="none" /></svg>
    </div>
  );
}

export default function App() {
  return (
    <div className="h-[839px] w-[1332px] overflow-hidden bg-white text-[12px] text-[#333] [font-family:'Noto_Sans','Noto_Sans_CJK_SC',sans-serif]">
      <TopBar />
      <Ribbon />
      <div className="flex h-[26px] items-center gap-[3px] bg-[#f5f5f5]">
        <Sel width="w-[96px]" label="第2层" />
        <Sel width="w-[99px]" label="板" />
        <Sel width="w-[98px]" label="板受力筋" />
        <Sel width="w-[99px]" label="无标注SLJ-L8@" />
        <Sel width="w-[98px]" label="分层板1" />
      </div>
      <div className="flex h-[663px]">
        <NavPanel />
        <div className="w-[4px] shrink-0" />
        <div className="flex h-full w-[288px] shrink-0 flex-col gap-[3px]">
          <ComponentPanel />
          <PropertyPanel />
        </div>
        <div className="relative w-[5px] shrink-0">
          <div className="absolute left-0 top-[282px] h-[58px] w-[5px] bg-[#6b7280]" />
        </div>
        <div className="relative h-[662px] w-[655px] shrink-0 overflow-hidden">
          <Canvas />
          <FloatTool />
          <div className="absolute bottom-0 left-0 right-0 flex h-[27px] items-center justify-center gap-[3px] bg-[rgba(0,0,0,0.58)] font-bold text-white">
            <svg width="14" height="16" viewBox="0 0 16 16" fill="none" stroke="#fff"><path d="M1 15l5-5M2 10h4v4M15 1l-5 5M10 2v4h4" /></svg>
            按鼠标左键指定第一个角点，或拾取构件图元
          </div>
        </div>
        <div className="relative w-[4px] shrink-0">
          <div className="absolute left-0 top-[282px] h-[58px] w-[4px] bg-[#6b7280]" />
        </div>
        <DisplayPanel />
      </div>
      <div className="flex h-[11px] items-start overflow-hidden bg-[#f8f8f8] pt-[3px]">
        <span className="ml-[88px] mt-[4px] whitespace-nowrap">层高：</span>
        <span className="ml-[103px] mt-[4px] whitespace-nowrap">底标高：</span>
        <span className="ml-[62px] mt-[4px] whitespace-nowrap">跨图层选择</span>
        <div className="ml-[51px] flex gap-[4px]">
          {["w-[24px]", "w-[22px]"].map((w, i) => <span key={i} className={`h-[20px] rounded-[3px] border ${w} ${i === 1 ? "border-[#5b9df0] bg-[#dcebfb]" : "border-[#888]"}`} />)}
        </div>
        <div className="ml-[19px] flex gap-[4px]">
          {["w-[25px]", "w-[35px]", "w-[35px]", "w-[24px]", "w-[25px]"].map((w, i) => <span key={i} className={`h-[20px] rounded-[3px] border border-[#888] ${w}`} />)}
        </div>
      </div>
    </div>
  );
}
